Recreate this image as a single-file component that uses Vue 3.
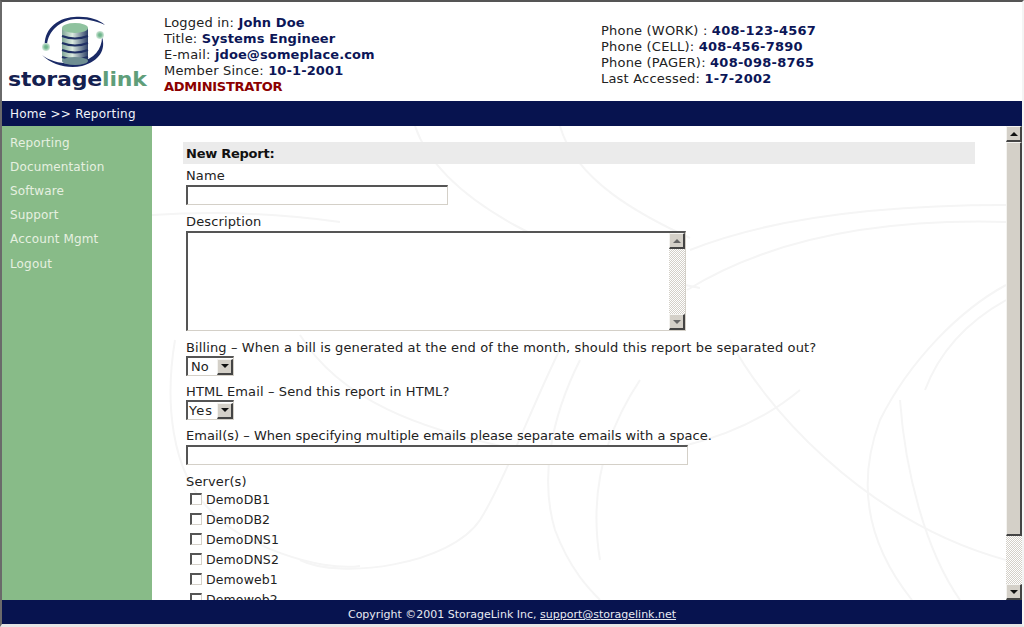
<script setup>
const userRows = [
  { label: 'Logged in:', value: 'John Doe' },
  { label: 'Title:', value: 'Systems Engineer' },
  { label: 'E-mail:', value: 'jdoe@someplace.com' },
  { label: 'Member Since:', value: '10-1-2001' },
]
const phoneRows = [
  { label: 'Phone (WORK) :', value: '408-123-4567' },
  { label: 'Phone (CELL):', value: '408-456-7890' },
  { label: 'Phone (PAGER):', value: '408-098-8765' },
  { label: 'Last Accessed:', value: '1-7-2002' },
]
const menu = ['Reporting', 'Documentation', 'Software', 'Support', 'Account Mgmt', 'Logout']
const servers = ['DemoDB1', 'DemoDB2', 'DemoDNS1', 'DemoDNS2', 'Demoweb1', 'Demoweb2']
</script>

<template>
  <div class="page">
    <header class="head">
      <div class="logo">
        <svg class="mark" width="70" height="56" viewBox="0 0 70 56">
          <defs>
            <linearGradient id="disk" x1="0" x2="1" y1="0" y2="0">
              <stop offset="0" stop-color="#7fa596" />
              <stop offset="0.4" stop-color="#dcebe0" />
              <stop offset="1" stop-color="#2c3f68" />
            </linearGradient>
            <radialGradient id="dot">
              <stop offset="0.3" stop-color="#6fb58c" />
              <stop offset="1" stop-color="#d3e8da" />
            </radialGradient>
          </defs>
          <path d="M3 32C1 16 14 3 32 2C46 1 56 4 63 10C52 5 44 4 34 4C18 5 6 16 5 30Z" fill="#1a2a66" />
          <path d="M60 22C64 34 58 46 40 51C26 54 10 50 0 40C10 48 26 50 38 47C52 44 60 34 60 22Z" fill="#1a2a66" />
          <circle cx="4" cy="32" r="4" fill="url(#dot)" />
          <circle cx="58" cy="20" r="4" fill="url(#dot)" />
          <rect x="20" y="13" width="26" height="33" fill="url(#disk)" />
          <path d="M20 21q13 5 26 0M20 28q13 5 26 0M20 35q13 5 26 0M20 42q13 5 26 0" fill="none" stroke="#1f3064" stroke-width="2" />
          <ellipse cx="33" cy="13" rx="13" ry="5" fill="#8fc29f" />
          <ellipse cx="33" cy="46" rx="13" ry="4" fill="#6f8e92" />
        </svg>
        <div class="wordmark"><span class="word-dark">storage</span><span class="word-green">link</span></div>
      </div>
      <div class="info user-info">
        <div v-for="row in userRows" :key="row.label">{{ row.label }} <b>{{ row.value }}</b></div>
        <div class="admin">ADMINISTRATOR</div>
      </div>
      <div class="info phone-info">
        <div v-for="row in phoneRows" :key="row.label">{{ row.label }} <b>{{ row.value }}</b></div>
      </div>
    </header>

    <nav class="crumb">Home &gt;&gt; Reporting</nav>

    <div class="middle">
      <aside class="side">
        <a v-for="item in menu" :key="item" class="side-link">{{ item }}</a>
      </aside>

      <main class="content">
        <svg class="swirl" width="854" height="474" viewBox="152 126 854 474" fill="none" stroke="#f5f5f5" stroke-width="2">
          <path d="M415 126C440 200 560 262 700 288" />
          <path d="M560 126C575 180 640 215 690 238" />
          <path d="M687 290C760 245 860 218 1006 222" />
          <path d="M690 250C760 222 860 205 1006 205" />
          <path d="M1006 285C960 310 910 360 880 420C850 500 880 560 912 600" />
          <path d="M1006 300C970 320 940 350 925 390" />
          <path d="M580 360C550 420 540 480 555 530C570 570 590 590 600 600" />
          <path d="M562 345C530 410 505 480 480 520C450 565 340 580 300 560" />
          <path d="M300 335C340 400 420 430 520 450C640 470 740 440 800 390" />
          <path d="M175 340C165 400 170 470 210 510C240 545 320 572 360 566" />
          <path d="M730 340C760 400 860 520 1006 560" />
          <path d="M640 380C600 440 590 500 600 560" />
          <path d="M900 400C905 470 925 550 960 600" />
          <path d="M152 215C230 210 290 215 340 222" />
        </svg>

        <form class="form" @submit.prevent>
          <h2 class="section">New Report:</h2>

          <label class="label first">Name</label>
          <input class="field name-field" type="text" />

          <label class="label gap-m">Description</label>
          <div class="field textarea">
            <textarea class="textarea-input"></textarea>
            <div class="mini-bar">
              <span class="btn"><i class="arrow up grey"></i></span>
              <span class="track"></span>
              <span class="btn"><i class="arrow down grey"></i></span>
            </div>
          </div>

          <label class="label gap-m">Billing – When a bill is generated at the end of the month, should this report be separated out?</label>
          <div class="select"><span class="select-text no">No</span><span class="btn"><i class="arrow down"></i></span></div>

          <label class="label gap-s">HTML Email – Send this report in HTML?</label>
          <div class="select"><span class="select-text yes">Yes</span><span class="btn"><i class="arrow down"></i></span></div>

          <label class="label gap-s tight">Email(s) – When specifying multiple emails please separate emails with a space.</label>
          <input class="field emails-field" type="text" />

          <label class="label gap-m">Server(s)</label>
          <div class="servers">
            <label v-for="s in servers" :key="s" class="server">
              <input class="check" type="checkbox" />
              <span>{{ s }}</span>
            </label>
          </div>
        </form>

        <div class="page-bar">
          <span class="btn big"><i class="arrow up"></i></span>
          <span class="thumb"></span>
          <span class="track"></span>
          <span class="btn big"><i class="arrow down"></i></span>
        </div>
      </main>
    </div>

    <footer class="foot">Copyright ©2001 StorageLink Inc, <a class="mail">support@storagelink.net</a></footer>
  </div>
</template>

<style>
html, body { margin: 0; background: #fff; overflow: hidden; }
</style>

<style scoped>
.page {
  width: 1024px;
  height: 627px;
  box-sizing: border-box;
  border-top: 2px solid #555;
  border-left: 2px solid #6a6a6a;
  border-right: 2px solid #f4f4f4;
  border-bottom: 3px solid #e6e6e6;
  display: flex;
  flex-direction: column;
  font: 13px/16px "DejaVu Sans", Verdana, sans-serif;
  color: #222;
  overflow: hidden;
}
.head {
  height: 99px;
  flex: none;
  display: flex;
  background: #fff;
}
.logo {
  width: 162px;
  flex: none;
  display: flex;
  flex-direction: column;
  padding: 13px 0 0 6px;
  box-sizing: border-box;
}
.mark { margin-left: 34px; flex: none; }
.wordmark {
  font: 700 22px/22px "DejaVu Sans", sans-serif;
  letter-spacing: -0.15px;
  margin-top: -2px;
  white-space: nowrap;
  transform-origin: left;
  transform: scaleY(0.86);
}
.word-dark { color: #14204f; }
.word-green { color: #5f9e7a; }
.info { letter-spacing: 0.2px; }
.info b { color: #0c1657; font-weight: 700; letter-spacing: 0.12px; }
.user-info { width: 437px; flex: none; padding-top: 13px; }
.phone-info { padding-top: 21px; }
.phone-info b { letter-spacing: 0.25px; }
.admin { color: #8b0000; font-weight: 700; letter-spacing: -0.25px; }
.crumb {
  height: 25px;
  flex: none;
  background: #07134f;
  color: #f2f4fa;
  font-size: 12px;
  letter-spacing: 0.25px;
  line-height: 27px;
  padding-left: 8px;
  box-sizing: border-box;
}
.middle { flex: 1; min-height: 0; display: flex; }
.side {
  width: 150px;
  flex: none;
  background: #88bb88;
  display: flex;
  flex-direction: column;
  padding: 5px 0 0 8px;
  box-sizing: border-box;
}
.side-link { height: 24px; line-height: 24px; color: #e6f0e0; font-size: 12px; letter-spacing: 0.15px; }
.side-link:last-child { margin-top: 1px; }
.content {
  flex: 1;
  position: relative;
  overflow: hidden;
  background: #fff;
  display: flex;
}
.swirl { position: absolute; left: 0; top: 0; }
.form {
  position: relative;
  width: 854px;
  padding: 16px 31px 0 31px;
  box-sizing: border-box;
  display: flex;
  flex-direction: column;
  align-items: flex-start;
  letter-spacing: 0.125px;
}
.form > * { flex: none; }
.section {
  margin: 0;
  align-self: stretch;
  height: 22px;
  background: #ebebeb;
  font-size: 13px;
  font-weight: 700;
  line-height: 23px;
  letter-spacing: -0.25px;
  color: #111;
  padding-left: 3px;
}
.label { display: block; height: 16px; line-height: 18px; margin-left: 3px; white-space: nowrap; }
.tight { letter-spacing: 0.02px; }
.first { margin-top: 3px; }
.gap-m { margin-top: 8px; }
.gap-s { margin-top: 7px; }
.field {
  display: block;
  box-sizing: border-box;
  margin: 2px 0 0 3px;
  border-style: solid;
  border-width: 2px 1px 1px 2px;
  border-color: #555 #d4d0c8 #d4d0c8 #555;
  background: #fff;
  padding: 0;
  outline: none;
}
.name-field { width: 262px; height: 20px; }
.emails-field { width: 502px; height: 20px; }
.textarea { width: 500px; height: 100px; display: flex; }
.textarea-input {
  flex: 1;
  border: 0;
  padding: 0;
  resize: none;
  outline: none;
  background: transparent;
}
.mini-bar {
  width: 16px;
  flex: none;
  display: flex;
  flex-direction: column;
}
.btn {
  width: 16px;
  height: 16px;
  flex: none;
  box-sizing: border-box;
  background: #d4d0c8;
  border-style: solid;
  border-width: 1px 2px 2px 1px;
  border-color: #f4f3f0 #444 #444 #f4f3f0;
  display: flex;
  align-items: center;
  justify-content: center;
}
.track {
  flex: 1;
  min-height: 0;
  background-color: #fff;
  background-image: conic-gradient(#d4d0c8 25%, #fff 0 50%, #d4d0c8 0 75%, #fff 0);
  background-size: 2px 2px;
}
.arrow { width: 0; height: 0; border-left: 4px solid transparent; border-right: 4px solid transparent; }
.arrow.up { border-bottom: 4px solid #111; }
.arrow.down { border-top: 4px solid #111; }
.arrow.up.grey { border-bottom-color: #666; }
.arrow.down.grey { border-top-color: #666; }
.select {
  width: 48px;
  height: 20px;
  box-sizing: border-box;
  margin: 1px 0 0 3px;
  border-style: solid;
  border-width: 2px 1px 1px 2px;
  border-color: #555 #d4d0c8 #d4d0c8 #555;
  background: #fff;
  display: flex;
  align-items: center;
  justify-content: space-between;
}
.select-text { padding-left: 1px; line-height: 17px; }
.select-text.no { padding-left: 3px; }
.select-text.yes { letter-spacing: 1px; }
.servers { display: flex; flex-direction: column; margin-left: 7px; margin-top: 1px; }
.server { height: 20px; display: flex; align-items: center; gap: 4px; font-size: 12.5px; flex: none; }
.check {
  appearance: none;
  width: 12px;
  height: 12px;
  margin: 0 0 2px;
  box-sizing: border-box;
  background: #fff;
  border-style: solid;
  border-width: 2px 1px 1px 2px;
  border-color: #555 #d4d0c8 #d4d0c8 #555;
}
.page-bar {
  position: absolute;
  right: 0;
  top: 0;
  bottom: 0;
  width: 16px;
  display: flex;
  flex-direction: column;
  background: #fff;
}
.thumb {
  height: 394px;
  flex: none;
  box-sizing: border-box;
  background: #d4d0c8;
  border-style: solid;
  border-width: 1px 2px 2px 1px;
  border-color: #f4f3f0 #444 #444 #f4f3f0;
}
.foot {
  height: 24px;
  flex: none;
  background: #07134f;
  color: #e8eaf2;
  font-size: 11px;
  line-height: 29px;
  text-align: center;
  box-sizing: border-box;
}
.mail { color: inherit; text-decoration: underline; }
</style>
